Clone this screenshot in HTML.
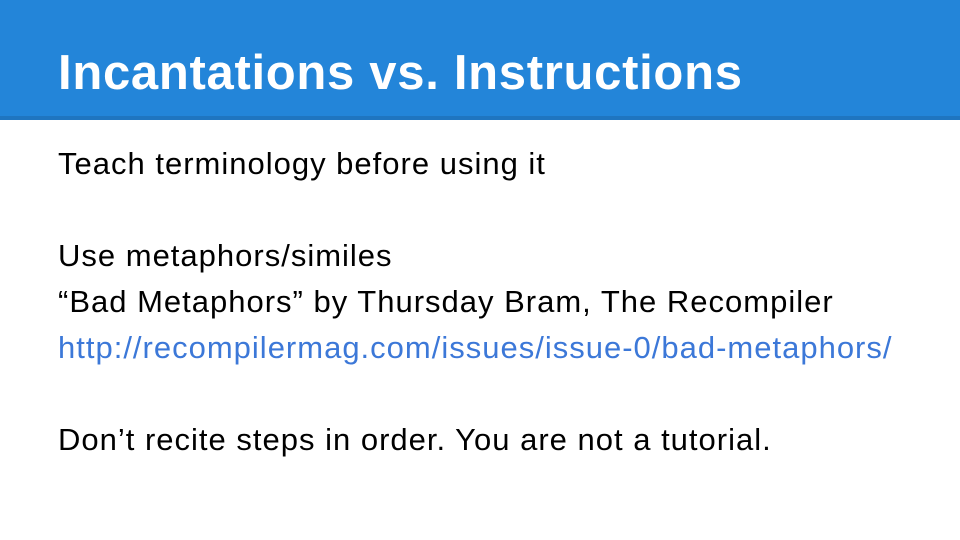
<!DOCTYPE html>
<html><head><style>
body{margin:0;width:960px;height:540px;background:#fff;overflow:hidden;font-family:"Liberation Sans",sans-serif;position:relative}
.hd{position:absolute;left:0;top:0;width:960px;height:116px;background:#2385d9;border-bottom:4px solid #1f75c0}
.hd h1{position:absolute;left:58px;top:43px;margin:0;font-size:49px;line-height:60px;color:#fff;font-weight:bold;letter-spacing:0.7px}
.l{position:absolute;left:58px;font-size:31px;color:#000;white-space:nowrap;letter-spacing:1px}
a{color:#3c78d8;text-decoration:none}
</style></head><body>
<div class="hd"><h1>Incantations vs. Instructions</h1></div>
<div class="l" style="top:146px">Teach terminology before using it</div>
<div class="l" style="top:238px">Use metaphors/similes</div>
<div class="l" style="top:284px">“Bad Metaphors” by Thursday Bram, The Recompiler</div>
<div class="l" style="top:330px"><a>http://recompilermag.com/issues/issue-0/bad-metaphors/</a></div>
<div class="l" style="top:422px">Don’t recite steps in order. You are not a tutorial.</div>
</body></html>
